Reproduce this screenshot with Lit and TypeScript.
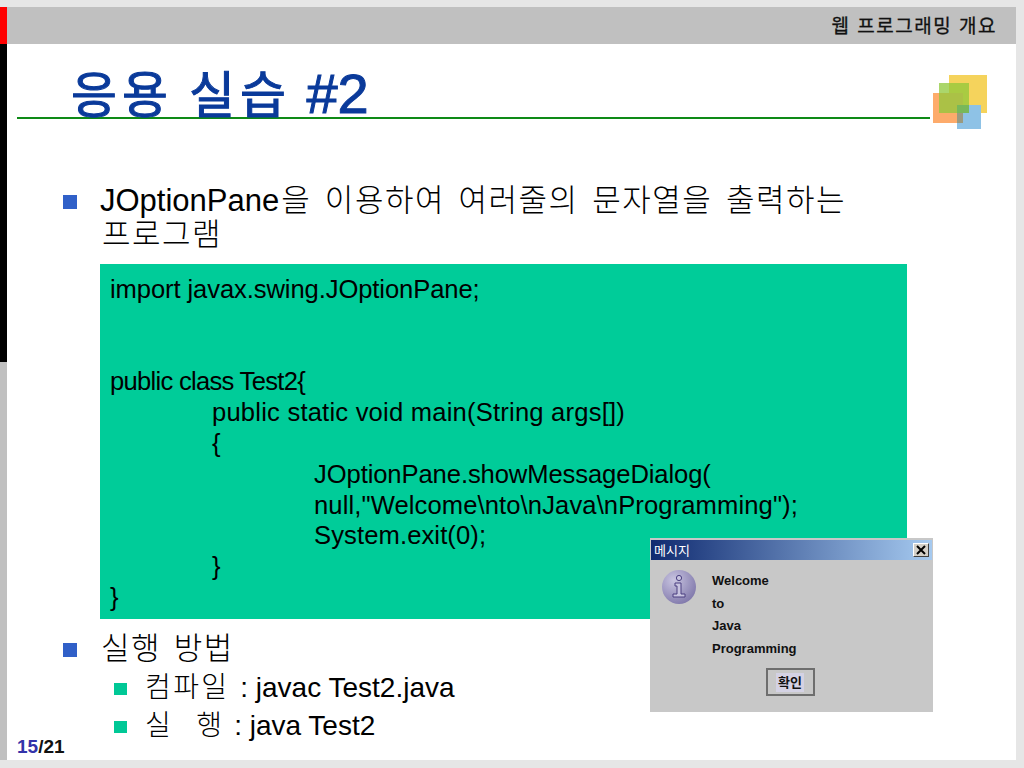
import { LitElement, html, css } from "lit";
import { customElement } from "lit/decorators.js";

const FONT = css`"Liberation Sans", "Noto Sans CJK KR", sans-serif`;

@customElement("app-root")
export class AppRoot extends LitElement {
  static styles = css`
    :host {
      display: block;
      width: 1024px;
      height: 768px;
      overflow: hidden;
      background: #e6e6e6;
      font-family: ${FONT};
      color: #000;
    }
    .frame {
      display: grid;
      grid-template-columns: 7px 1009px;
      grid-template-rows: 37px 716px;
      padding-top: 7px;
      height: 753px;
    }
    .rail { display: flex; flex-direction: column; grid-row: 1 / 3; width: 7px; }
    .rail .red { height: 37px; background: #ff0000; }
    .rail .black { height: 318px; background: #000; }
    .rail .gray { height: 398px; background: #c0c0c0; }
    .head {
      background: #c0c0c0;
      display: flex;
      justify-content: flex-end;
      align-items: center;
      padding-right: 19px;
      font-size: 19px;
      letter-spacing: 1.5px;
      -webkit-text-stroke: 0.3px #111;
      color: #111;
      padding-bottom: 2px;
      box-sizing: border-box;
    }
    .slide { background: #fff; position: relative; height: 716px; }
    .titlebar { position: relative; height: 74px; padding-left: 10px; }
    h1 {
      margin: 0;
      padding-left: 54px;
      height: 75px;
      box-sizing: border-box;
      border-bottom: 2px solid #0e8a16;
      width: 913px;
      font-weight: 400;
      font-size: 56px;
      line-height: 100px;
      -webkit-text-stroke: 1px #0a3a9a;
      color: #0a3a9a;
      white-space: pre;
    }
    h1 .hg { font-size: 50px; letter-spacing: 5px; word-spacing: -3px; }
    .logo { position: absolute; left: 926px; top: 31px; width: 54px; height: 54px; }
    .body { padding: 66px 0 0 93px; }
    .l1 { display: flex; font-size: 31px; line-height: 34px; }
    .b1 { width: 14px; height: 14px; background: #3060c8; margin: 11px 0 0 -37px; flex: none; }
    .t1 { margin-left: 23px; width: 790px; }
    .ko { letter-spacing: 1.5px; word-spacing: 3.5px; font-weight: 300; margin-left: 2px; }
    .second .ko { margin-left: 1px; word-spacing: 2.5px; }
    .code {
      margin-top: 12px;
      width: 807px;
      height: 355px;
      box-sizing: border-box;
      background: #00cc99;
      padding: 10px 0 0 10px;
      font-size: 25.6px;
      line-height: 30.8px;
      color: #000;
    }
    .code div { white-space: pre; min-height: 30.8px; }
    .i1 { padding-left: 102px; }
    .i2 { padding-left: 204px; }
    .code .narrow { letter-spacing: -0.1px; }
    .code .narrower { letter-spacing: -0.72px; }
    .code .loose { letter-spacing: 0.2px; }
    .code .slight { letter-spacing: 0.1px; }
    .second { margin-top: 13px; }
    .l2 { display: flex; font-size: 28px; line-height: 38px; margin-left: 14px; align-items: flex-start; }
    .b2 { width: 13px; height: 12px; background: #00c896; margin: 14px 18px 0 0; flex: none; }
    .sub { margin-top: 3px; }
    .sub .ko { letter-spacing: 2.4px; margin-left: 0; }
    .sub .wide { margin-right: 3px; }
    .sub .run { word-spacing: -2.5px; margin-right: 2px; }
    .pager {
      position: absolute;
      left: 10px;
      top: 692px;
      font-size: 19px;
      font-weight: 700;
      color: #111;
    }
    .pager span { color: #3333aa; }
    .dlg {
      position: absolute;
      left: 643px;
      top: 494px;
      width: 283px;
      height: 174px;
      background: #c8c8c8;
      box-sizing: border-box;
      padding: 2px 1px 0 1px;
      font-weight: 700;
      color: #111;
    }
    .tb {
      height: 20px;
      background: linear-gradient(90deg, #0f2a70 0%, #a6caf0 100%);
      display: flex;
      align-items: center;
      justify-content: space-between;
      padding: 0 3px 0 3px;
      color: #fff;
      font-size: 13px;
      font-weight: 400;
    }
    .tb > span:first-child { position: relative; bottom: 1px; }
    .x {
      width: 16px; height: 14px;
      background: #d4d0c8;
      border: 1px solid; border-color: #fff #404040 #404040 #fff;
      box-sizing: border-box;
      display: flex;
    }
    .dbody { display: flex; padding: 10px 0 0 11px; }
    .msg { margin-left: 16px; font-size: 13px; line-height: 22.6px; }
    .btn-row { display: flex; justify-content: center; margin-top: 8px; padding-right: 3px; }
    .btn {
      width: 49px; height: 28px;
      box-sizing: border-box;
      border: 2px solid #6e6e6e;
      display: flex; align-items: center; justify-content: center;
      font-size: 13px;
    }
    .btn span {
      background: #d4d2e4;
      padding: 2px;
      line-height: 15px;
    }
  `;

  render() {
    return html`
      <div class="frame">
        <div class="rail"><div class="red"></div><div class="black"></div><div class="gray"></div></div>
        <div class="head">웹 프로그래밍 개요</div>
        <div class="slide">
          <div class="titlebar">
            <h1><span class="hg">응용 실습</span> #2</h1>
            <svg class="logo" viewBox="0 0 54 54" aria-hidden="true">
              <rect x="16" y="0" width="38" height="38" fill="#f5d35c"></rect>
              <rect x="0" y="18" width="30" height="30" fill="#fdab6b"></rect>
              <rect x="6" y="8" width="30" height="30" fill="#8fc83a" fill-opacity=".75"></rect>
              <rect x="24" y="30" width="24" height="24" fill="#8ec2e6"></rect>
              <rect x="24" y="30" width="6" height="18" fill="#9a9a80"></rect>
              <rect x="24" y="30" width="12" height="8" fill="#78b85a"></rect>
            </svg>
          </div>
          <div class="body">
            <div class="l1">
              <span class="b1"></span>
              <span class="t1">JOptionPane<span class="ko">을 이용하여 여러줄의 문자열을 출력하는</span><br /><span class="ko">프로그램</span></span>
            </div>
            <div class="code">
              <div class="narrow">import javax.swing.JOptionPane;</div>
              <div></div>
              <div></div>
              <div class="narrower">public class Test2{</div>
              <div class="i1 loose">public static void main(String args[])</div>
              <div class="i1">{</div>
              <div class="i2 narrow">JOptionPane.showMessageDialog(</div>
              <div class="i2 slight">null,"Welcome\\nto\\nJava\\nProgramming");</div>
              <div class="i2 slight">System.exit(0);</div>
              <div class="i1">}</div>
              <div>}</div>
            </div>
            <div class="l1 second">
              <span class="b1"></span>
              <span class="t1"><span class="ko">실행 방법</span></span>
            </div>
            <div class="sub">
              <div class="l2"><span class="b2"></span><span><span class="ko wide">컴파일</span> : javac Test2.java</span></div>
              <div class="l2"><span class="b2"></span><span><span class="ko run">실&nbsp;&nbsp; 행</span> : java Test2</span></div>
            </div>
          </div>
          <div class="pager"><span>15</span>/21</div>
          <div class="dlg">
            <div class="tb">
              <span>메시지</span>
              <span class="x">
                <svg width="14" height="12" viewBox="0 0 14 12" aria-hidden="true"><path d="M3 2 L11 10 M11 2 L3 10" stroke="#000" stroke-width="2"></path></svg>
              </span>
            </div>
            <div class="dbody">
              <svg width="34" height="34" viewBox="0 0 34 34" aria-hidden="true">
                <defs>
                  <radialGradient id="g" cx=".35" cy=".3" r=".8">
                    <stop offset="0" stop-color="#c8c4e0"></stop>
                    <stop offset="1" stop-color="#7c74a8"></stop>
                  </radialGradient>
                </defs>
                <circle cx="17" cy="17" r="17" fill="url(#g)"></circle>
                <circle cx="17" cy="8" r="2.6" fill="#c8c4e0" stroke="#4a3f80"></circle>
                <path d="M13 13 H19 V24 H23 V27 H11 V24 H15 V16 H13 Z" fill="#c8c4e0" stroke="#4a3f80"></path>
              </svg>
              <div class="msg">Welcome<br />to<br />Java<br />Programming</div>
            </div>
            <div class="btn-row"><div class="btn"><span>확인</span></div></div>
          </div>
        </div>
      </div>
    `;
  }
}
